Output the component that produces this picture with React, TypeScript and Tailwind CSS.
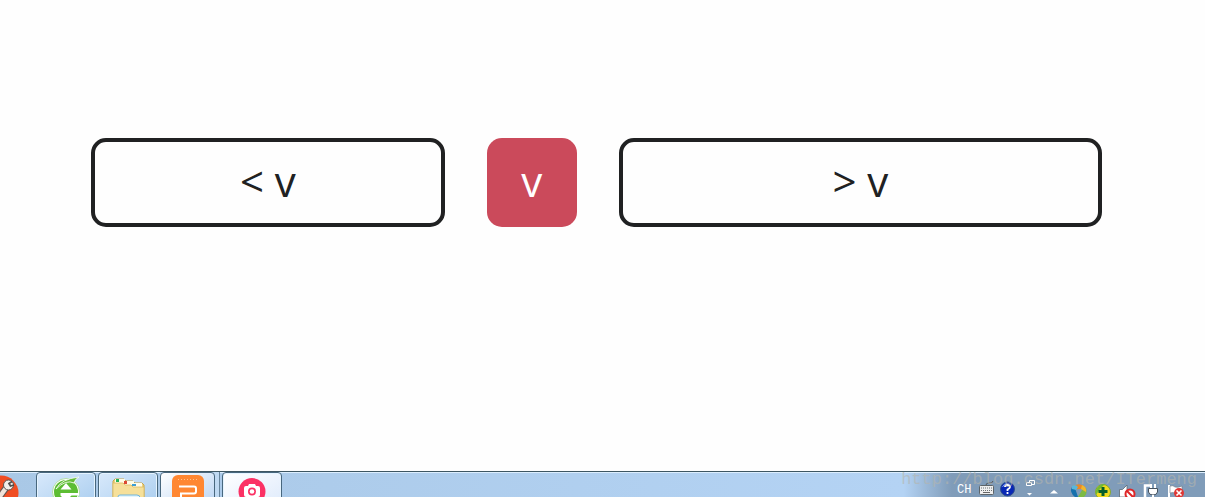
import type { ReactNode } from "react";

function ToolIcon() {
  return (
    <svg viewBox="0 0 36 25" className="h-[25px] w-9 shrink-0" aria-hidden="true">
      <circle cx="1" cy="21" r="17.5" fill="#f04d23" />
      <path d="M-2 27 L6 16" stroke="#5d5450" strokeWidth="6.5" />
      <path d="M-2 27 L6 16" stroke="#f1e2d8" strokeWidth="4.5" />
      <circle cx="8.500" cy="13" r="5" fill="#f2eeea" stroke="#5d5450" strokeWidth="1" />
      <path d="M12 9.500 L9 11.500 L10.500 14 L14 13" fill="none" stroke="#514d4b" strokeWidth="1.800" />
    </svg>
  );
}

function BrowserIcon() {
  return (
    <svg viewBox="0 0 32 28" className="h-7 w-8" aria-hidden="true">
      <circle cx="16" cy="16" r="13.5" fill="#fff" stroke="#a4d98b" strokeWidth=".8" />
      <circle cx="16" cy="16" r="12" fill="#5cbd32" />
      <path d="M10.500 13.500 L16 7 L21.500 13.500Z" fill="#fff" />
      <path d="M10.500 17 H29 V19.500 H21.500 L16 25 L10.500 19.500Z" fill="#fff" />
      <path d="M6 13 Q11 3 29 1 Q25 3 24 7 Q16 3 6 13Z" fill="#65bd38" stroke="#fff" strokeWidth=".8" />
    </svg>
  );
}

function FolderIcon() {
  return (
    <svg viewBox="0 0 34 26" className="h-[26px] w-[34px]" aria-hidden="true">
      <path d="M2 26 V5 L4 3 H13 L15 5 H22 L24 7 H31 L33 9 V26Z" fill="#eed480" stroke="#c9a54d" />
      <path d="M4 3 H14 V7 H4Z M13 5 H23 V9 H13Z M22 7 H31 V11 H22Z" fill="#fffbe5" />
      <path d="M5 3 H8 V6 H5Z" fill="#28b356" />
      <path d="M13 5 H16 V8 H13Z" fill="#dd4933" />
      <path d="M21 8 H25 V10 H21Z" fill="#3c9ed5" />
      <path d="M2 7 H12 L14 9 H20 L22 11 H33 V26 H2Z" fill="#f6e09a" stroke="#dbbb62" strokeWidth=".8" />
      <path d="M7 26 V21 Q7 19 9 19 H26 Q29 19 29 22 V26" fill="#e2f5fc" stroke="#71b5dc" />
    </svg>
  );
}

function PresentationIcon() {
  return (
    <svg viewBox="0 0 32 25" className="h-[25px] w-8" aria-hidden="true">
      <rect width="32" height="34" rx="6" fill="#ff8732" />
      <path d="M6 4.5 H27" stroke="#ffc18a" strokeDasharray="1 2" />
      <path d="M7 11.500 H22 Q24 11.500 24 13.500 V16.500 Q24 18.500 22 18.500 H9 V25" fill="none" stroke="#fff" strokeWidth="2" />
    </svg>
  );
}

function CameraIcon() {
  return (
    <svg viewBox="0 0 28 26" className="h-[26px] w-7" aria-hidden="true">
      <circle cx="14" cy="15.500" r="13.5" fill="#fb3164" />
      <path d="M8 10 H10 L11 8 H17 L18 10 H20 Q22 10 22 12 V19 Q22 21 20 21 H8 Q6 21 6 19 V12 Q6 10 8 10Z" fill="#fff" />
      <circle cx="14" cy="15.500" r="4" fill="#fb3164" />
      <circle cx="14" cy="15.500" r="2.300" fill="#fff" />
    </svg>
  );
}

function TaskButton({ label, active, children }: { label: string; active?: boolean; children: ReactNode }) {
  return (
    <button
      type="button"
      aria-label={label}
      className={`flex h-10 w-[60px] shrink-0 items-start justify-center rounded-sm border border-[#48677e] pt-[3px] shadow-[inset_0_0_0_1px_#e5f4ff] ${
        active ? "bg-linear-to-br from-white to-[#dce9fb]" : "bg-linear-to-br from-[#d8e9fb] to-[#a6cbee]"
      }`}
    >
      {children}
    </button>
  );
}

function TrayIcons() {
  return (
    <svg viewBox="0 0 228 25" className="h-[25px] w-[228px]" aria-hidden="true">
      <path d="M9 13 Q9 11 12 11 Q15 12 16 9" fill="none" stroke="#555" />
      <rect x="2.5" y="13.500" width="14" height="9" rx="1" fill="#eee" stroke="#5d6468" />
      <path d="M4 16 H15 M4 18.500 H15" stroke="#6d7274" strokeWidth="1.2" strokeDasharray="1 1" />
      <path d="M6 20.500 H13" stroke="#666" />
      <circle cx="30.500" cy="17" r="7" fill="#0828b5" stroke="#31508d" />
      <path d="M25.500 15 Q27 11.500 30 11.500" stroke="#7b9bf1" fill="none" />
      <path d="M28 15 Q28 13 30.500 13 Q33 13 33 15 Q33 16.300 30.500 17.500 V19 M30.500 20 V22" fill="none" stroke="#fff" strokeWidth="1.8" />
      <path d="M52.500 8.500 H57.500 V12.500 H52.500Z" fill="none" stroke="#fff" />
      <path d="M49.500 10.500 H54.500 V13.500 H49.500Z" fill="#7894b3" stroke="#fff" />
      <path d="M50 21 H55 L52.500 23.500Z M73 21.500 L77 18 L81 21.500Z" fill="#fff" />

      <path d="M97 14 Q103 10 108 15 L109 18 Q102 16 97 18Z" fill="#e98728" />
      <path d="M95 15 Q98 15 99 19 L101 25 H98 Q92 20 95 15Z" fill="#1671ad" />
      <path d="M95 14 Q99 12 101 15 L99 18 L95 17Z" fill="#58b7dc" />
      <path d="M109 16 Q111 21 107 25 H101 L105 18Z" fill="#7cba45" />
      <path d="M105 13 Q110 15 109 20 L104 17Z" fill="#f2b72d" />

      <circle cx="126" cy="20" r="7.500" fill="#f1da1e" stroke="#84a833" />
      <path d="M119 18 Q122 12 128 12 L123 17 L119 23Z" fill="#6fba35" />
      <path d="M126 15 V24 M121.500 19.500 H130.500" stroke="#075f2b" strokeWidth="3" />

      <path d="M142.500 17.500 H145.500 L150 13 V25 H142.500Z" fill="#fff" stroke="#5d6973" strokeWidth=".8" />
      <circle cx="153" cy="22" r="4.500" fill="#fff" stroke="#df2526" strokeWidth="2" />
      <path d="M150 19 L156 25" stroke="#df2526" strokeWidth="2" />

      <path d="M173 13.500 H168 V25" fill="none" stroke="#fff" strokeWidth="2.500" />
      <path d="M171.500 16.500 H180.500 V20 Q180 23 176 23 Q172 23 171.500 20Z" fill="#fff" stroke="#46525e" />
      <path d="M174 12 V16 M178 12 V16 M176 23 V25" stroke="#fff" strokeWidth="2" />

      <path d="M192 13 V25" stroke="#fff" strokeWidth="2" />
      <path d="M193 14 Q196 13 198 15 Q201 16 205 14 V21 Q201 23 198 21 Q196 20 193 21Z" fill="#fff" stroke="#6e7781" strokeWidth=".6" />
      <circle cx="202" cy="21" r="5" fill="#df3835" />
      <path d="M199.500 18.500 L204.500 23.500 M204.500 18.500 L199.500 23.500" stroke="#fff" strokeWidth="1.6" />
    </svg>
  );
}

const box = "flex h-[89px] min-w-0 items-center justify-center rounded-[15px] pb-[3px]";
const outlined = "border-4 border-[#202122]";

export default function App() {
  return (
    <div className="flex min-h-screen flex-col bg-[#fefefe] font-['Open_Sans',sans-serif]">
      <main className="flex grow items-start gap-[42px] pt-[138px] pr-[103px] pl-[91px] text-[42px] leading-none text-[#202122]">
        <div className={`${box} ${outlined} flex-[352_1_0%]`}>&lt; v</div>
        <div className={`${box} w-[90px] shrink-0 bg-[#cb4a5b] text-white`}>v</div>
        <div className={`${box} ${outlined} flex-[484_1_0%]`}>&gt; v</div>
      </main>

      <footer className="relative flex h-[26px] shrink-0 overflow-hidden border-t border-[#3d5662] bg-linear-to-r from-[#a9c8e6] from-0% via-[#b4d3f4] via-75% to-[#809cb9] to-79% shadow-[inset_0_1px_0_#dceefe]">
        <ToolIcon />
        <nav aria-label="Open programs" className="flex items-start gap-0.5">
          <TaskButton label="Browser">
            <BrowserIcon />
          </TaskButton>
          <TaskButton label="Files">
            <FolderIcon />
          </TaskButton>
          <div className="flex w-[60px] border-r border-[#66849c] bg-[#bfd9f2]">
            <button
              type="button"
              aria-label="Presentation"
              className="flex h-10 w-[55px] items-start justify-center rounded-sm border border-[#48677e] bg-linear-to-br from-white to-[#b4d1f2] pt-0.5"
            >
              <PresentationIcon />
            </button>
          </div>
          <TaskButton label="Screen recorder" active>
            <CameraIcon />
          </TaskButton>
        </nav>

        <div className="ml-auto flex items-start">
          <span className="w-5 pt-3 font-['Liberation_Mono',monospace] text-[12px] leading-3 text-white">CH</span>
          <TrayIcons />
        </div>
        <span className="absolute top-0 right-2 font-['Liberation_Mono',monospace] text-[17px] leading-4 text-[#b5b5ad]/60">
          http://blog.csdn.net/ITermeng
        </span>
      </footer>
    </div>
  );
}
